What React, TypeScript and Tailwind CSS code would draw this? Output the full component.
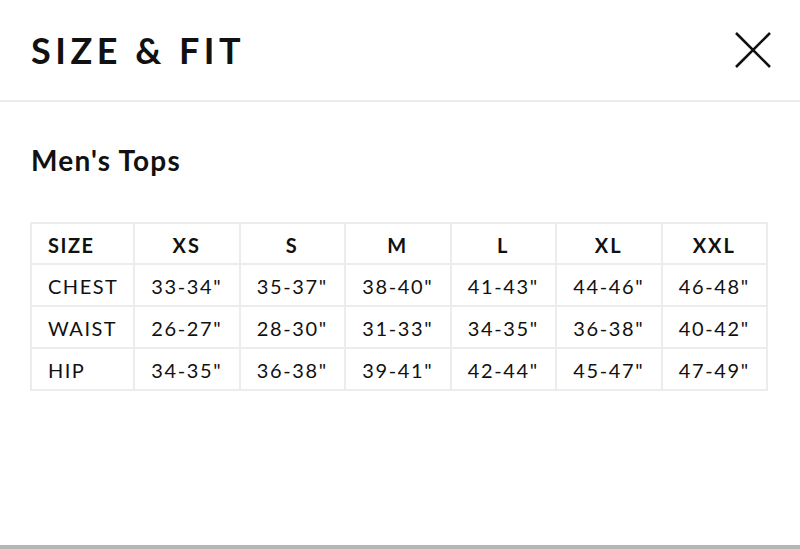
import React from "react";

const sizes = ["XS", "S", "M", "L", "XL", "XXL"];

const rows = [
	{ label: "CHEST", values: ['33-34"', '35-37"', '38-40"', '41-43"', '44-46"', '46-48"'] },
	{ label: "WAIST", values: ['26-27"', '28-30"', '31-33"', '34-35"', '36-38"', '40-42"'] },
	{ label: "HIP", values: ['34-35"', '36-38"', '39-41"', '42-44"', '45-47"', '47-49"'] },
];

const App = () => {
	return (
		<div className="h-[549px] w-full flex flex-col bg-white text-[#111] font-['Lato',sans-serif]">
			<header className="h-[102px] shrink-0 flex items-center justify-between pl-[31px] pr-[29px] border-b-2 border-[#ececec]">
				<h1 className="text-[36px] leading-none font-bold tracking-[4.5px]">SIZE &amp; FIT</h1>
				<button aria-label="Close" className="w-[36px] h-[36px] flex items-center justify-center">
					<svg width="36" height="36" viewBox="0 0 36 36" fill="none">
						<path d="M1 1L35 35M35 1L1 35" stroke="#111" strokeWidth="2.6" />
					</svg>
				</button>
			</header>

			<main className="px-[30px] pt-[44px]">
				<h2 className="text-[28px] leading-none font-bold tracking-[1.2px] pl-[1px]">Men's Tops</h2>

				<table className="mt-[48px] w-[738px] border-collapse table-fixed">
					<colgroup>
						<col className="w-[103px]" />
						{sizes.map((s) => (
							<col key={s} />
						))}
					</colgroup>
					<thead>
						<tr className="h-[41px]">
							<th className="border-2 border-[#ececec] text-left pl-[16px] pt-[2px] text-[20px] font-bold tracking-[1.5px]">SIZE</th>
							{sizes.map((s) => (
								<th key={s} className="border-2 border-[#ececec] text-center pt-[2px] text-[20px] font-bold tracking-[2px]">
									{s}
								</th>
							))}
						</tr>
					</thead>
					<tbody>
						{rows.map((row) => (
							<tr key={row.label} className="h-[42px]">
								<td className="border-2 border-[#ececec] text-left pl-[16px] pt-[2px] text-[20px] tracking-[1.5px]">{row.label}</td>
								{row.values.map((v, i) => (
									<td key={i} className="border-2 border-[#ececec] text-center pt-[2px] text-[20px] tracking-[1.6px]">
										{v}
									</td>
								))}
							</tr>
						))}
					</tbody>
				</table>
			</main>

			<div className="mt-auto h-[4px] shrink-0 bg-[#b6b6b6]" />
		</div>
	);
};

export default App;
